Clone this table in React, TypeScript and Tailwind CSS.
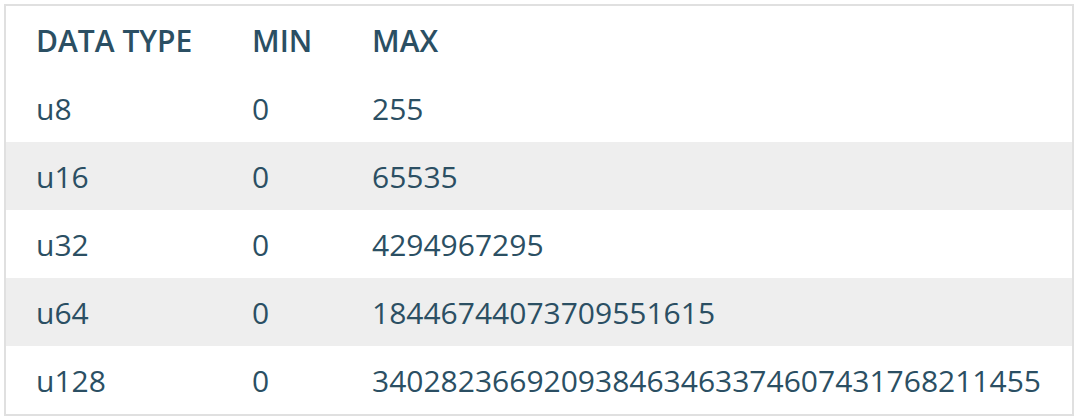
const rows = [
  { type: 'u8', min: '0', max: '255' },
  { type: 'u16', min: '0', max: '65535' },
  { type: 'u32', min: '0', max: '4294967295' },
  { type: 'u64', min: '0', max: '18446744073709551615' },
  { type: 'u128', min: '0', max: '340282366920938463463374607431768211455' },
]

export default function App() {
  return (
    <div className="w-[1078px] h-[420px] bg-white p-[4px] font-['Open_Sans',sans-serif] text-[#2b4f63]">
      <div className="border-2 border-[#e0e0e0] w-[1070px]">
        <div className="grid grid-cols-[216px_120px_1fr] h-[68px] items-center text-[30px] font-semibold uppercase">
          <div className="pl-[30px]">Data Type</div>
          <div className="pl-[30px]">Min</div>
          <div className="pl-[30px]">Max</div>
        </div>
        {rows.map((r, i) => (
          <div
            key={r.type}
            className={`grid grid-cols-[216px_120px_1fr] h-[68px] items-center text-[30px] ${i % 2 === 1 ? 'bg-[#eeeeee]' : 'bg-white'}`}
          >
            <div className="pl-[30px]">{r.type}</div>
            <div className="pl-[30px]">{r.min}</div>
            <div className="pl-[30px] whitespace-nowrap">{r.max}</div>
          </div>
        ))}
      </div>
    </div>
  )
}
